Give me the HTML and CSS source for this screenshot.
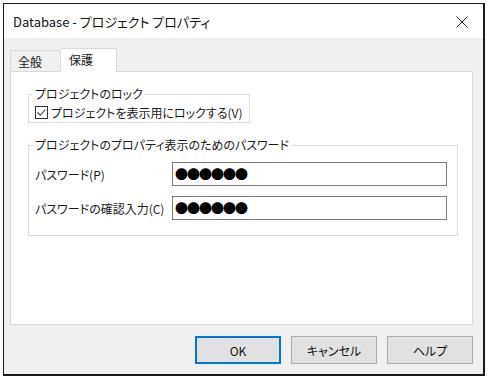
FILE: index.html
```html
<!DOCTYPE html>
<html lang="ja">
<head>
    <meta charset="UTF-8">
    <title>Database - プロジェクト プロパティ</title>
    <link rel="stylesheet" href="styles.css">
</head>
<body>
    <div class="window">
        <div class="titlebar">
            <span class="title">Database - プロジェクト プロパティ</span>
            <span class="close">
                <svg width="12" height="12" viewBox="0 0 12 12"><path d="M0.5 0.5L11.5 11.5M11.5 0.5L0.5 11.5" stroke="#222" stroke-width="1"/></svg>
            </span>
        </div>

        <div class="body">
            <div class="tabs">
                <div class="tab">全般</div>
                <div class="tab selected">保護</div>
            </div>

            <div class="panel">
                <fieldset class="group lock-group">
                    <legend>プロジェクトのロック</legend>
                    <label class="check">
                        <span class="box">
                            <svg width="11" height="11" viewBox="0 0 11 11"><path d="M1.5 5.5L4.3 8.3L9.5 2.5" fill="none" stroke="#333" stroke-width="1.1"/></svg>
                        </span>
                        プロジェクトを表示用にロックする(V)
                    </label>
                </fieldset>

                <fieldset class="group pass-group">
                    <legend>プロジェクトのプロパティ表示のためのパスワード</legend>
                    <div class="row">
                        <span class="label">パスワード(P)</span>
                        <div class="field">●●●●●●</div>
                    </div>
                    <div class="row">
                        <span class="label">パスワードの確認入力(C)</span>
                        <div class="field">●●●●●●</div>
                    </div>
                </fieldset>
            </div>

            <div class="buttons">
                <button class="btn default">OK</button>
                <button class="btn">キャンセル</button>
                <button class="btn">ヘルプ</button>
            </div>
        </div>
    </div>
</body>
</html>
```

FILE: styles.css
```css
/* Dialog window */
body {
    margin: 0;
    background-color: #fff;
    font-family: "Noto Sans CJK JP", "Noto Sans", sans-serif;
    font-size: 12px;
    font-feature-settings: "palt";
    color: #1a1a1a;
}

.window {
    margin: 3px 0 0 3px;
    width: 479px;
    height: 370px;
    border: 1px solid #1a1a1a;
    border-right: 2px solid #1a1a1a;
    border-bottom: 2px solid #1a1a1a;
    display: flex;
    flex-direction: column;
    background-color: #f0f0f0;
}

.titlebar {
    height: 34px;
    background-color: #fff;
    display: flex;
    align-items: center;
    justify-content: space-between;
    padding: 0 15px 0 9px;
    flex-shrink: 0;
}

.title {
    font-size: 13px;
    color: #111;
}

.close {
    display: flex;
    margin-top: 2px;
}

.body {
    flex: 1;
    display: flex;
    flex-direction: column;
    padding: 9px 10px 0 6px;
}

/* Tabs */
.tabs {
    display: flex;
    height: 24px;
    align-items: flex-end;
}

.tab {
    width: 51px;
    height: 21px;
    line-height: 22px;
    padding: 0 0 0 7px;
    box-sizing: border-box;
    border: 1px solid #d9d9d9;
    border-bottom: none;
    background-color: #f0f0f0;
}

.tab.selected {
    width: 56px;
    height: 24px;
    line-height: 22px;
    background-color: #fff;
    padding: 0 0 0 8px;
    margin-bottom: -1px;
    position: relative;
    z-index: 1;
    border-left: none;
}

.panel {
    height: 254px;
    background-color: #fff;
    border: 1px solid #d9d9d9;
    padding: 15px 14px 0 17px;
    box-sizing: border-box;
}

/* Group boxes */
.group {
    margin: 0;
    border: 1px solid #dcdcdc;
    padding: 0 6px;
}

.group legend {
    padding: 0 2px;
    margin-left: -2px;
    line-height: 14px;
    white-space: nowrap;
}

.lock-group {
    width: 205px;
    height: 31px;
    padding-top: 3px;
}

.check {
    display: flex;
    align-items: center;
    gap: 3px;
    white-space: nowrap;
}

.box {
    width: 11px;
    height: 11px;
    border: 1px solid #333;
    display: flex;
}

.pass-group {
    margin-top: 15px;
    height: 86px;
    padding: 10px 10px 0 6px;
}

.row {
    display: flex;
    align-items: center;
    margin-bottom: 10px;
}

.label {
    width: 137px;
    white-space: nowrap;
}

.field {
    flex: 1;
    height: 22px;
    border: 1px solid #7a7a7a;
    font-size: 13px;
    line-height: 22px;
    padding-left: 2px;
    letter-spacing: -1px;
    color: #000;
}

/* Buttons */
.buttons {
    display: flex;
    justify-content: flex-end;
    gap: 10px;
    margin-top: 11px;
}

.btn {
    width: 86px;
    height: 28px;
    background-color: #e1e1e1;
    border: 1px solid #adadad;
    font-family: inherit;
    font-size: 12px;
    font-feature-settings: "palt";
    color: #111;
    padding: 0;
}

.btn.default {
    border: 2px solid #0078d7;
}
```
